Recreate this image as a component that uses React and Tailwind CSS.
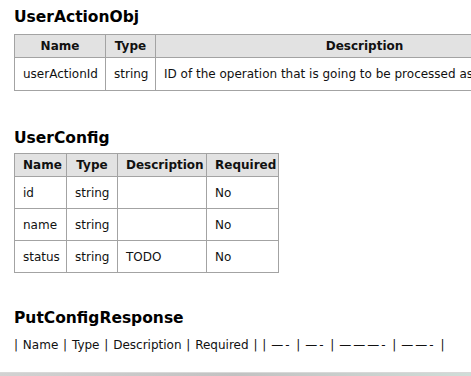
import React from 'react';

const font = { fontFamily: '"DejaVu Sans", Verdana, sans-serif' };

const userActionObj = [
  { name: 'userActionId', type: 'string', description: 'ID of the operation that is going to be processed asap' },
];

const userConfig = [
  { name: 'id', type: 'string', description: '', required: 'No' },
  { name: 'name', type: 'string', description: '', required: 'No' },
  { name: 'status', type: 'string', description: 'TODO', required: 'No' },
];

const th = 'border border-[#a3a3a3] bg-[#e2e2e2] font-bold text-center px-2 h-[23px] whitespace-nowrap';
const td = 'border border-[#a3a3a3] px-2 text-left whitespace-nowrap';

// the unrendered markdown table separator, dashes got smart-quoted
const separators = ['—-', '—-', '———-', '——-'];

const App = () => {
  return (
    <div className="h-screen w-full overflow-hidden bg-white flex flex-col text-[#111]" style={font}>
      <div className="pl-[14px] flex-1">
        <h2 className="mt-[7px] text-[15.5px] leading-[20px] font-bold text-black">UserActionObj</h2>

        <table className="mt-[7px] border-collapse text-[12px] w-[559px] table-fixed">
          <colgroup>
            <col className="w-[91px]" />
            <col className="w-[50px]" />
            <col className="w-[418px]" />
          </colgroup>
          <thead>
            <tr>
              <th className={th}>Name</th>
              <th className={th}>Type</th>
              <th className={th}>Description</th>
            </tr>
          </thead>
          <tbody>
            {userActionObj.map((row) => (
              <tr key={row.name} className="h-[33px]">
                <td className={td}>{row.name}</td>
                <td className={td}>{row.type}</td>
                <td className={td}>{row.description}</td>
              </tr>
            ))}
          </tbody>
        </table>

        <h2 className="mt-[37px] text-[15.5px] leading-[20px] font-bold text-black">UserConfig</h2>

        <table className="mt-[5px] border-collapse text-[12px] w-[265px] table-fixed">
          <colgroup>
            <col className="w-[52px]" />
            <col className="w-[51px]" />
            <col className="w-[89px]" />
            <col className="w-[72px]" />
          </colgroup>
          <thead>
            <tr>
              <th className={th}>Name</th>
              <th className={th}>Type</th>
              <th className={th}>Description</th>
              <th className={th}>Required</th>
            </tr>
          </thead>
          <tbody>
            {userConfig.map((row) => (
              <tr key={row.name} className="h-[32px]">
                <td className={td}>{row.name}</td>
                <td className={td}>{row.type}</td>
                <td className={td}>{row.description}</td>
                <td className={td}>{row.required}</td>
              </tr>
            ))}
          </tbody>
        </table>

        <h2 className="mt-[35px] text-[15.5px] leading-[20px] font-bold text-black">PutConfigResponse</h2>
        <p className="mt-[9px] text-[12px] leading-[16px] whitespace-nowrap [word-spacing:1px]">
          | Name | Type | Description | Required | |{' '}
          {separators.map((s, i) => (
            <React.Fragment key={i}>
              <span className="tracking-[2px]">{s}</span> |{' '}
            </React.Fragment>
          ))}
        </p>
      </div>

      {/* bottom strip */}
      <div className="h-[4px] w-full border-t border-[#d8d8d8] bg-gradient-to-r from-[#d2d2d2] via-[#c2c2c2] to-[#d0ddd8]" />
    </div>
  );
};

export default App;
